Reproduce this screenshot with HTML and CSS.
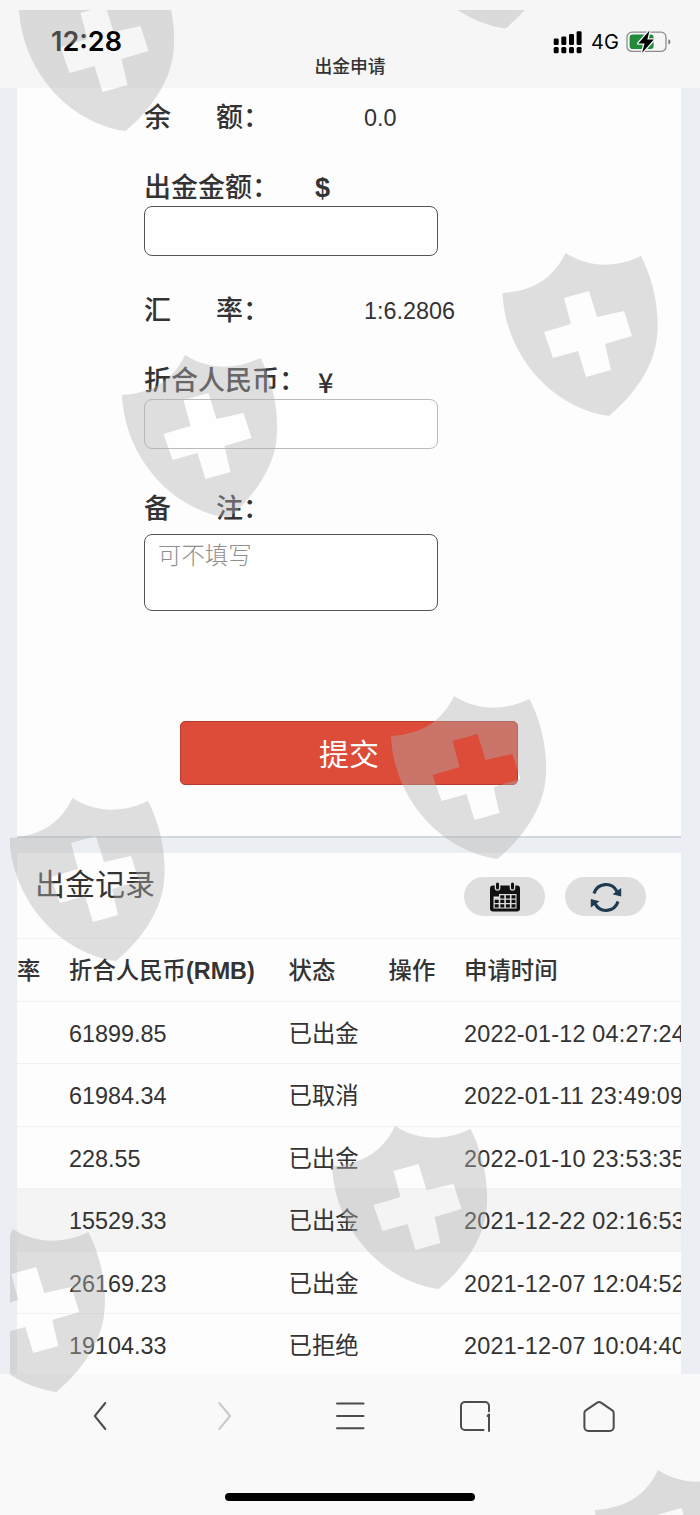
FILE: index.html
```html
<!DOCTYPE html>
<html lang="zh-CN">
<head>
<meta charset="utf-8">
<title>出金申请</title>
<link rel="stylesheet" href="styles.css">
</head>
<body>
<div class="screen">
  <header class="top">
    <div class="status">
      <span class="clock">12:28</span>
      <div class="signals">
        <svg width="30" height="28" viewBox="0 0 30 28">
          <rect x=".7" y="10.5" width="5" height="6.5" rx="1.2"/><rect x="8.3" y="8.5" width="5" height="8.5" rx="1.2"/><rect x="16" y="6" width="5" height="11" rx="1.2"/><rect x="23.6" y="3.3" width="5" height="13.7" rx="1.2"/>
          <rect x=".7" y="19" width="5" height="6.2" rx="1.5"/><rect x="8.3" y="19" width="5" height="6.2" rx="1.5"/><rect x="16" y="19" width="5" height="6.2" rx="1.5"/><rect x="23.6" y="19" width="5" height="6.2" rx="1.5"/>
        </svg>
        <span class="network">4G</span>
        <svg width="46" height="28" viewBox="0 0 46 28">
          <rect x="1" y="4.2" width="39" height="19.2" rx="5" fill="none" stroke="#8c8c8c" stroke-width="1.3"/>
          <rect x="3.6" y="6.6" width="24" height="14.4" rx="3" fill="#238a3c"/>
          <path d="M42.4 11.2c2.6.8 2.6 4.4 0 5.2z" fill="#777"/>
          <path d="M23.5 2.6 12.3 15.4h6.3L16 25l11.8-13.4h-6.5z" fill="#000" stroke="#f6f6f6" stroke-width="2.6" paint-order="stroke" stroke-linejoin="round"/>
        </svg>
      </div>
    </div>
    <h1 class="page-title">出金申请</h1>
  </header>

  <main class="content">
    <section class="panel form">
      <div class="row"><span class="label spread"><b>余</b><b>额：</b></span><span class="value">0.0</span></div>
      <div class="field">
        <div class="label"><span class="name">出金金额：</span><span class="unit">$</span></div>
        <div class="input"></div>
      </div>
      <div class="row"><span class="label spread"><b>汇</b><b>率：</b></span><span class="value">1:6.2806</span></div>
      <div class="field">
        <div class="label"><span class="name name-wide">折合人民币：</span><span class="unit yuan">¥</span></div>
        <div class="input readonly"></div>
      </div>
      <div class="field remark">
        <div class="label spread"><b>备</b><b>注：</b></div>
        <div class="input area">可不填写</div>
      </div>
      <div class="submit">提交</div>
    </section>

    <section class="panel records">
      <div class="records-head">
        <h2 class="records-title">出金记录</h2>
        <div class="tools">
          <span class="pill">
            <svg width="30" height="30" viewBox="0 0 30 30">
              <rect x="0" y="3.500" width="30" height="26" rx="3" fill="#111"/>
              <path d="M3.500 14.500H9V12h17.500v14.500h-23z" fill="#ddd"/>
              <path d="M7.500 2v4M22.500 2v4" stroke="#ddd" stroke-width="5.600" stroke-linecap="round"/>
              <path d="M7.500 2v4M22.500 2v4" stroke="#111" stroke-width="3" stroke-linecap="round"/>
              <path d="M10.300 14.800h15.500M4.700 19.300h21M4.700 23.800h21" stroke="#111" stroke-width="3.200" stroke-dasharray="4 1.600"/>
            </svg>
          </span>
          <span class="pill">
            <svg width="32" height="32" viewBox="0 0 32 32">
              <g fill="none" stroke="#1e3b52" stroke-width="3.100"><path d="M4 12.500C7.500 1.500 22 .500 27 10.500"/><path d="M28 20.500C24.500 31.500 10 32.500 5 22.500"/></g>
              <path d="M31.200 7v8.500l-8.700-2.300zM.8 26.500V18l8.700 2.300z" fill="#1e3b52"/>
            </svg>
          </span>
        </div>
      </div>
      <div class="table">
        <div class="tr th"><span>率</span><span>折合人民币<b>(RMB)</b></span><span>状态</span><span>操作</span><span>申请时间</span></div>
        <div class="tr"><span></span><span>61899.85</span><span>已出金</span><span></span><span class="time">2022-01-12 04:27:24</span></div>
        <div class="tr"><span></span><span>61984.34</span><span>已取消</span><span></span><span class="time">2022-01-11 23:49:09</span></div>
        <div class="tr"><span></span><span>228.55</span><span>已出金</span><span></span><span class="time">2022-01-10 23:53:35</span></div>
        <div class="tr active"><span></span><span>15529.33</span><span>已出金</span><span></span><span class="time">2021-12-22 02:16:53</span></div>
        <div class="tr"><span></span><span>26169.23</span><span>已出金</span><span></span><span class="time">2021-12-07 12:04:52</span></div>
        <div class="tr"><span></span><span>19104.33</span><span>已拒绝</span><span></span><span class="time">2021-12-07 10:04:40</span></div>
      </div>
    </section>
  </main>

  <footer class="bottom">
    <nav class="nav">
      <svg viewBox="0 0 36 36"><path d="M23.300 5 12.800 18l10.500 13"/></svg>
      <svg class="off" viewBox="0 0 36 36"><path d="M12.300 5 23 18 12.300 31"/></svg>
      <svg viewBox="0 0 36 36"><path d="M5 5.600h26.500M5 18h26.500M5 30.300h26.500"/></svg>
      <svg viewBox="0 0 36 36"><path d="M32 13.300V8a4 4 0 0 0-4-4H8a4 4 0 0 0-4 4v20a4 4 0 0 0 4 4h18.500M30.600 18l1.400-1.500V33"/></svg>
      <svg viewBox="0 0 36 36"><path d="M15.200 4.600a3.300 3.300 0 0 1 3.800 0l11.300 7.700a3 3 0 0 1 1.400 2.600V29a4 4 0 0 1-4 4H6.400a4 4 0 0 1-4-4V14.900a3 3 0 0 1 1.400-2.600z"/></svg>
    </nav>
    <div class="home-bar"></div>
  </footer>

  <svg class="watermark" width="700" height="1515" viewBox="0 0 700 1515">
    <defs>
      <clipPath id="area"><rect x="10" y="10" width="690" height="1505"/></clipPath>
      <path id="shield" fill-rule="evenodd" d="M12.500 53C45 51 64 37 75.500 13 99 28 126 28 151 16 164 41 171 75 166 104 161 131 141 158 119 176 62 168 15 115 12.500 53ZM74 58 99 51 107 77 134 71 142 96 115 104 121 130 96 137 88 111 63 118 54 92 81 84Z"/>
    </defs>
    <g clip-path="url(#area)" fill="#b2b2b2" fill-opacity=".413">
      <use href="#shield" x="6.500" y="-45"/>
      <use href="#shield" x="386.500" y="-147.500"/>
      <use href="#shield" x="490" y="240"/>
      <use href="#shield" x="109.500" y="342"/>
      <use href="#shield" x="378.500" y="683"/>
      <use href="#shield" x="-3" y="785"/>
      <use href="#shield" x="319.500" y="1113"/>
      <use href="#shield" x="-62.700" y="1216"/>
      <use href="#shield" x="582.500" y="1457"/>
    </g>
  </svg>
</div>
</body>
</html>
```
FILE: styles.css
```css
* { box-sizing: border-box; }
body { margin: 0; }
.screen {
  position: relative;
  width: 700px;
  height: 1515px;
  overflow: hidden;
  display: flex;
  flex-direction: column;
  background: #ebeef2;
  color: #333;
  font-family: "Liberation Sans", "Noto Sans CJK SC", sans-serif;
  font-size: 23.4px;
}
.top { height: 88px; padding-top: 28px; background: #f6f6f6; }
.status { display: flex; justify-content: space-between; align-items: center; height: 28px; padding: 0 28px 0 51px; }
.clock { font: 600 27px/28px Inter, sans-serif; color: #000; }
.signals { display: flex; align-items: center; }
.network { width: 43px; padding-left: 8px; font: 400 20px/30px Inter, sans-serif; color: #000; }
.page-title { margin: 0; text-align: center; font-size: 17.8px; line-height: 23px; font-weight: 500; }

.content { height: 1286px; padding: 0 19px 0 17px; overflow: hidden; }
.panel { background: #fdfdfd; }
.form { height: 750px; padding-left: 127px; border-bottom: 2px solid #d3d8dd; }
.label { font-size: 27px; font-weight: 500; white-space: nowrap; }
.label b { font-weight: 500; }
.spread { display: flex; }
.spread b:first-child { width: 72px; }
.row { display: flex; align-items: center; height: 58px; line-height: 58px; }
.row .label { width: 219px; padding-top: 1px; }
.value { padding: 2px 0 0 1px; }
.field { margin: 24px 0 25px; }
.field .label { display: flex; height: 36px; line-height: 37px; }
.name { width: 171px; }
.name-wide { width: 174px; }
.unit { font-weight: 700; }
.yuan { font-family: "Noto Sans CJK SC", sans-serif; font-weight: 500; }
.input { width: 294px; height: 50px; border: 1.5px solid #555; border-radius: 8px; background: #fefefe; }
.readonly { border-color: #bbb; }
.remark { margin: 42px 0 0; }
.area { height: 77px; margin-top: 7px; padding: 4px 13px; font-weight: 300; line-height: 35px; color: #8f8f8f; }
.submit {
  width: 338px;
  height: 64px;
  margin: 110px 0 0 36px;
  border: 1px solid #b83c2c;
  border-radius: 5px;
  background: #dd4b39;
  color: #fff;
  font-size: 30px;
  line-height: 66px;
  text-align: center;
}

.records { height: 521px; margin-top: 15px; overflow: hidden; }
.records-head { display: flex; justify-content: space-between; height: 85px; padding: 0 35px 0 18px; }
.records-title { margin: 0; font-size: 30px; font-weight: 400; line-height: 64px; }
.tools { display: flex; gap: 20px; padding-top: 24px; }
.pill { display: flex; align-items: center; justify-content: center; width: 81px; height: 39px; border-radius: 20px; background: #dedede; }
.tr {
  display: grid;
  grid-template-columns: 52px 219.5px 100px 75.5px 1fr;
  height: 62.5px;
  border-top: 1px solid #f1f1f1;
  line-height: 64px;
  white-space: nowrap;
}
.th { font-weight: 500; }
.th b { font-weight: 700; }
.tr span { min-width: 0; }
.active { background: #f4f4f4; }
.time { letter-spacing: .2px; }

.bottom { height: 141px; padding-top: 24px; background: #f9f9f9; }
.nav { display: flex; justify-content: space-around; padding: 0 38px; }
.nav svg { width: 36px; height: 36px; fill: none; stroke: #4c4c4c; stroke-width: 2; stroke-linecap: round; stroke-linejoin: round; }
.nav .off { stroke: #c9c9c9; }
.home-bar { width: 250px; height: 8px; margin: 59px auto 0; border-radius: 4px; background: #000; }
.watermark { position: absolute; left: 0; top: 0; pointer-events: none; }
```
